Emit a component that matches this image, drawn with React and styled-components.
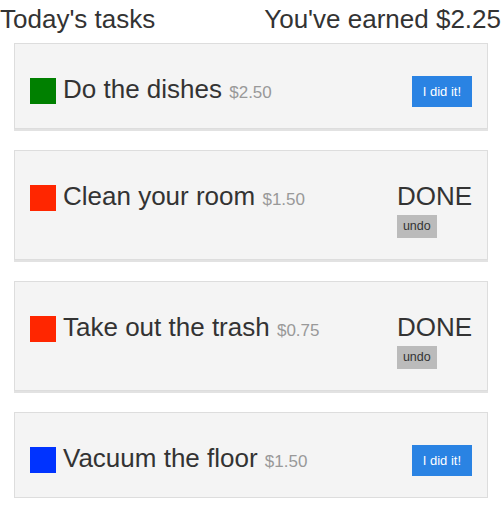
import React from 'react';
import styled, { createGlobalStyle } from 'styled-components';

const GlobalStyle = createGlobalStyle`
  html, body {
    margin: 0;
    padding: 0;
    background: #fff;
    font-family: "Liberation Sans", Arial, sans-serif;
    color: #333;
  }
`;

const tasks = [
  { id: 1, name: 'Do the dishes', price: '$2.50', color: '#008000', done: false },
  { id: 2, name: 'Clean your room', price: '$1.50', color: '#ff2600', done: true },
  { id: 3, name: 'Take out the trash', price: '$0.75', color: '#ff2600', done: true },
  { id: 4, name: 'Vacuum the floor', price: '$1.50', color: '#0033ff', done: false },
];

const App = () => (
  <Page>
    <GlobalStyle />
    <Header>
      <span>Today&apos;s tasks</span>
      <span>You&apos;ve earned $2.25</span>
    </Header>
    <List>
      {tasks.map(task => (
        <Card key={task.id}>
          <Label>
            <Swatch color={task.color} />
            <Title>
              {task.name}
              {' '}
              <Price>{task.price}</Price>
            </Title>
          </Label>
          {task.done ? (
            <DoneBlock>
              <Done>DONE</Done>
              <UndoButton type="button">undo</UndoButton>
            </DoneBlock>
          ) : (
            <DidItButton type="button">I did it!</DidItButton>
          )}
        </Card>
      ))}
    </List>
  </Page>
);

const Page = styled.div`
  width: 503px;
`;

const Header = styled.div`
  display: flex;
  justify-content: space-between;
  padding: 4px 2px 0 0;
  font-size: 26px;
  line-height: normal;
  margin-bottom: 8px;
`;

const List = styled.div`
  display: flex;
  flex-direction: column;
  gap: 21px;
  margin: 0 15px 0 14px;
`;

const Card = styled.div`
  display: flex;
  justify-content: space-between;
  align-items: flex-start;
  padding: 30px 15px 21px;
  background: #f4f4f4;
  border: 1px solid #dddddd;
  box-shadow: 0 2px 0 #e2e2e2;
`;

const Label = styled.div`
  display: flex;
  align-items: center;
  gap: 7px;
`;

const Swatch = styled.span`
  display: block;
  width: 26px;
  height: 26px;
  margin-top: 2px;
  background: ${props => props.color};
`;

const Title = styled.span`
  font-size: 26px;
  line-height: normal;
  color: #333;
`;

const Price = styled.span`
  font-size: 17px;
  color: #999;
`;

const DidItButton = styled.button`
  margin-top: 2px;
  padding: 8px 11px;
  border: none;
  background: #2a83e3;
  color: #fff;
  font-family: "Liberation Sans", Arial, sans-serif;
  font-size: 13px;
  line-height: 15px;
`;

const DoneBlock = styled.div`
  display: flex;
  flex-direction: column;
  align-items: flex-start;
  gap: 3px;
`;

const Done = styled.span`
  font-size: 26px;
  line-height: normal;
  color: #333;
`;

const UndoButton = styled.button`
  padding: 4px 6px;
  border: none;
  background: #bbbbbb;
  color: #333;
  font-family: "Liberation Sans", Arial, sans-serif;
  font-size: 12.5px;
  line-height: 15px;
`;

export default App;
